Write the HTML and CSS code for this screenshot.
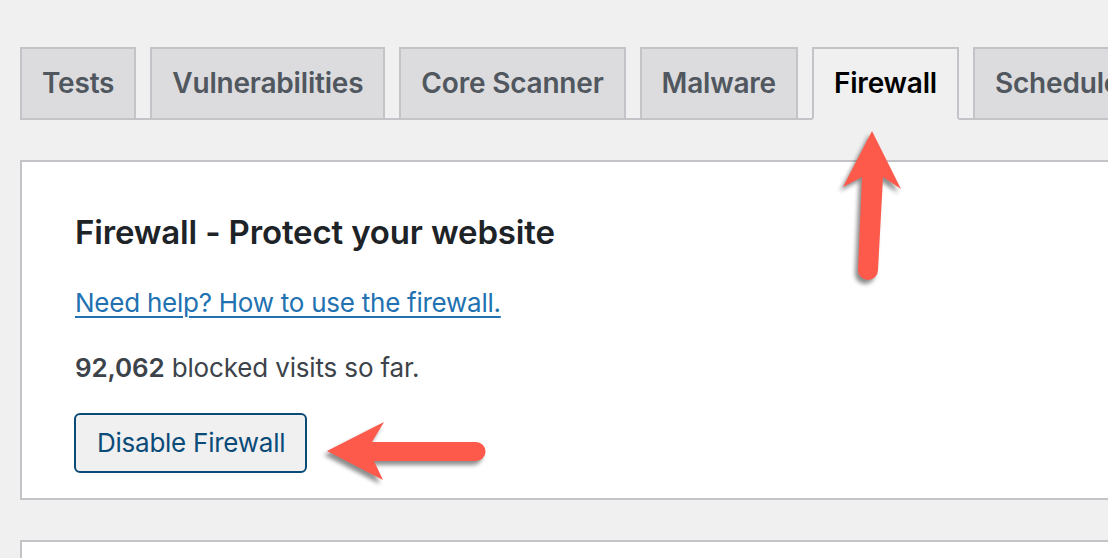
FILE: index.html
```html
<!DOCTYPE html>
<html lang="en">
<head>
<meta charset="utf-8">
<title>Firewall</title>
<link rel="stylesheet" href="styles.css">
</head>
<body>
<div class="page">
  <nav class="tabs">
    <a class="tab">Tests</a>
    <a class="tab">Vulnerabilities</a>
    <a class="tab">Core Scanner</a>
    <a class="tab">Malware</a>
    <a class="tab active">Firewall</a>
    <a class="tab">Scheduled Scans</a>
  </nav>
  <section class="panel">
    <h2 class="title">Firewall - Protect your website</h2>
    <p class="help"><a href="#">Need help? How to use the firewall.</a></p>
    <p class="stats"><strong>92,062</strong> blocked visits so far.</p>
    <button class="btn">Disable Firewall</button>
  </section>
  <section class="panel next"></section>
</div>
<svg class="arrow arrow-up" width="100" height="180" viewBox="0 0 100 180">
  <path d="M52 11 L81 69 L63 57 L58 150 A10 10 0 0 1 38 150 L42 57 L23 67 Z" fill="#fd5a4b"/>
</svg>
<svg class="arrow arrow-left" width="190" height="90" viewBox="0 0 190 90">
  <path d="M17 41 L74 12 L62 32 L166 32 A9.5 9.5 0 0 1 166 51 L64 51 L73 70 Z" fill="#fd5a4b"/>
</svg>
</body>
</html>
```

FILE: styles.css
```css
html, body {
  margin: 0;
  padding: 0;
  background: #f0f0f1;
  overflow: hidden;
  height: 558px;
}
body {
  font-family: Inter, "Liberation Sans", sans-serif;
  color: #3c434a;
  position: relative;
}
.page {
  padding: 47px 0 0 20px;
  width: 1300px;
}
.tabs {
  display: flex;
  gap: 14px;
  border-bottom: 2px solid #c3c4c7;
  height: 71px;
}
.tab {
  display: block;
  box-sizing: border-box;
  height: 73px;
  padding: 10px 20px;
  border: 2px solid #c3c4c7;
  background: #dcdcde;
  color: #50575e;
  font-size: 28px;
  font-weight: 600;
  line-height: 49px;
  white-space: nowrap;
  letter-spacing: -0.2px;
}
.tab.active {
  background: #f0f0f1;
  border-bottom-color: #f0f0f1;
  color: #000;
}
.panel {
  margin-top: 40px;
  background: #fff;
  border: 2px solid #c3c4c7;
  padding: 50px 53px 25px;
}
.title {
  margin: 0;
  font-size: 33px;
  line-height: 40px;
  font-weight: 600;
  color: #1d2327;
  letter-spacing: -0.15px;
}
.help {
  margin: 33px 0 0;
  font-size: 26px;
  line-height: 36px;
  letter-spacing: -0.25px;
}
.help a {
  color: #2271b1;
  text-decoration: underline;
  text-decoration-thickness: 2px;
  text-underline-offset: 4px;
}
.stats {
  margin: 29px 0 0;
  font-size: 26px;
  line-height: 36px;
  letter-spacing: -0.15px;
}
.stats strong {
  font-weight: 600;
}
.btn {
  display: block;
  margin: 27px 0 0 -1px;
  height: 60px;
  padding: 0 20px 0 21px;
  border: 2px solid #0a4b78;
  border-radius: 6px;
  background: #f0f0f1;
  color: #0a4b78;
  font-family: inherit;
  font-size: 26px;
  line-height: 56px;
  letter-spacing: -0.25px;
}
.panel.next {
  margin-top: 40px;
  height: 60px;
  padding: 0;
}
.arrow {
  position: absolute;
  filter: drop-shadow(-3px 4px 2px rgba(0, 0, 0, 0.45));
}
.arrow-up {
  left: 820px;
  top: 120px;
}
.arrow-left {
  left: 310px;
  top: 410px;
}
```
